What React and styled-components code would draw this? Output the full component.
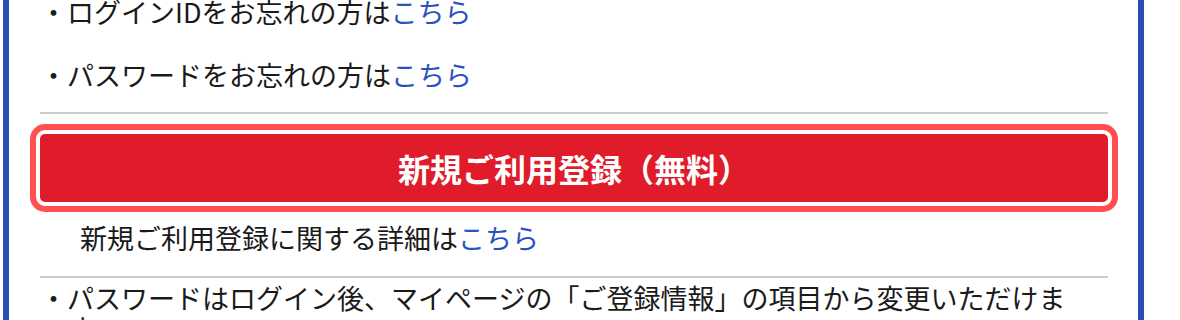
import React from "react"
import styled, { createGlobalStyle } from "styled-components"

const GlobalStyle = createGlobalStyle`
    html, body {
        margin: 0;
        padding: 0;
        background: #fff;
        overflow: hidden;
    }
    body {
        font-family: "Noto Sans CJK JP", "Noto Sans", sans-serif;
        color: #1a1a1a;
    }
`

const Panel = styled.div`
    margin: -8px 0 0 3px;
    width: 1141px;
    box-sizing: border-box;
    border-left: 6px solid #2a4eb7;
    border-right: 6px solid #2a4eb7;
    padding: 0 30px 0 31px;
`

const LinkList = styled.ul`
    list-style: none;
    margin: 0 0 17px;
    padding: 0;
`

const LinkItem = styled.li`
    font-size: 27px;
    line-height: 40px;
    margin-bottom: 23px;

    &:last-child {
        margin-bottom: 0;
    }
`

const Link = styled.a`
    color: #2a52be;
    text-decoration: none;
`

const Rule = styled.hr`
    border: 0;
    height: 2px;
    background: #cccccc;
    margin: 0;
`

const SignupButton = styled.button`
    display: block;
    width: calc(100% + 8px);
    margin: 16px -4px 0;
    height: 76px;
    box-sizing: border-box;
    border: 4px solid #fff;
    border-radius: 9px;
    background: #e01c2b;
    box-shadow: 0 0 0 6px #ff4f4f;
    color: #fff;
    font-family: "Noto Sans CJK JP", sans-serif;
    font-size: 32px;
    font-weight: 700;
    cursor: pointer;
`

const Detail = styled.p`
    margin: 12px 0 18px;
    padding-left: 40px;
    font-size: 27px;
    line-height: 40px;
`

const NoteList = styled.ul`
    list-style: none;
    margin: 5px 0 0;
    padding: 0 0 0 27px;
`

const NoteItem = styled.li`
    font-size: 27px;
    line-height: 30px;
    text-indent: -27px;
`

export default function App() {
    return (
        <>
            <GlobalStyle />
            <Panel>
                <LinkList>
                    <LinkItem>
                        ・ログインIDをお忘れの方は<Link href="#">こちら</Link>
                    </LinkItem>
                    <LinkItem>
                        ・パスワードをお忘れの方は<Link href="#">こちら</Link>
                    </LinkItem>
                </LinkList>
                <Rule />
                <SignupButton>新規ご利用登録（無料）</SignupButton>
                <Detail>
                    新規ご利用登録に関する詳細は<Link href="#">こちら</Link>
                </Detail>
                <Rule />
                <NoteList>
                    <NoteItem>
                        ・パスワードはログイン後、マイページの「ご登録情報」の項目から変更いただけます。
                    </NoteItem>
                </NoteList>
            </Panel>
        </>
    )
}
